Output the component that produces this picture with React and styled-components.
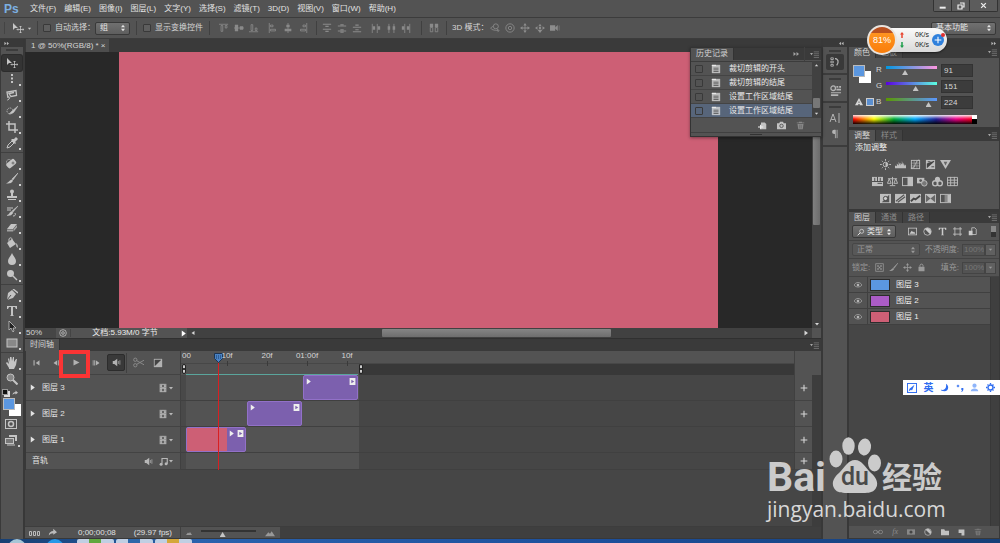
import React, { useState } from 'react';
import styled, { createGlobalStyle, css } from 'styled-components';

const layers = [
    { id: 3, name: '图层 3', color: '#5b97e0' },
    { id: 2, name: '图层 2', color: '#ab5cc6' },
    { id: 1, name: '图层 1', color: '#cd5f75' },
];

const menus = ['文件(F)', '编辑(E)', '图像(I)', '图层(L)', '文字(Y)', '选择(S)', '滤镜(T)', '3D(D)', '视图(V)', '窗口(W)', '帮助(H)'];

const history = ['裁切剪辑的开头', '裁切剪辑的结尾', '设置工作区域结尾', '设置工作区域结尾'];

const toolGroups = [
    ['move', 'marquee', 'lasso', 'quick', 'crop', 'dropper'],
    ['heal', 'brush', 'stamp', 'historyBrush', 'eraser', 'bucket', 'blur', 'dodge'],
    ['pen', 'type', 'select', 'shape'],
    ['hand', 'zoom'],
];

// 图标 (12 x 12)
const line = { fill: 'none', stroke: 'currentColor', strokeWidth: 1 };
const shapes = {
    move: <><path d="M1 1v7l2-2h3z" /><path d="M8.500 4v7M5 7.500h7M7.500 5l1-1 1 1M7.500 10l1 1 1-1M6 6.500l-1 1 1 1M11 6.500l1 1-1 1" {...line} strokeWidth=".8" /></>,
    marquee: <path d="M6 1v10" {...line} strokeWidth="2" strokeDasharray="2 1.500" />,
    lasso: <><path d="M2 9L1 3l9-1.500.5 5-5.500 1-2-3 5-1" {...line} strokeWidth="1.300" /><path d="M2 8c2-1 2 1 1 2s-2 1-1 1" {...line} /></>,
    quick: <><circle cx="4" cy="6" r="3" {...line} strokeDasharray="1 1" /><path d="M12 1L6 6 3 9l4-1 1-1z" stroke="currentColor" strokeWidth=".5" /></>,
    crop: <path d="M3 0v9h9M0 3h9v9" {...line} strokeWidth="1.500" />,
    dropper: <><path d="M1 11l1-3 4-4 2 2-4 4z" {...line} /><path d="M5 3l4 4 1-1-1-1 3-3-2-2-2 2-2 0z" /></>,
    heal: <><rect x="3" y="2" width="6" height="10" rx="2" transform="rotate(50 6 6)" /><circle cx="3" cy="5" r="2.500" {...line} strokeDasharray="1 1" /><path d="M5.500 6h3M7 4.500v3" stroke="#535353" strokeWidth=".7" /></>,
    brush: <><path d="M12 0L6 6l1 1z" stroke="currentColor" strokeWidth=".6" /><path d="M5.500 6.500l1.500 1c-1 3-4 3-7 3 3-1 3-3 5.500-4z" /></>,
    stamp: <><circle cx="6" cy="2.500" r="2" /><path d="M5 3h2v4H5zM1 7h10v2H1zM2 10h8v1H2z" /></>,
    historyBrush: <><path d="M12 1L6 6l1 1zM5.500 6.500l1.500 1c-1 3-4 3-6 3 3-1 2-3 4.500-4z" stroke="currentColor" strokeWidth=".5" /><path d="M1 3h6M1 5h4M9 8c1 2 0 3-2 3" {...line} /></>,
    eraser: <><path d="M5 3h6L7 8H1z" /><path d="M1 8.500h6v2H1zM7.500 8l3.500-4v2.500L7.500 10.500z" opacity=".7" /></>,
    bucket: <><path d="M1 6l5-4 4 5-6 4z" /><path d="M3 5V2c1-2 3-1 3 0v3" {...line} /><path d="M10 6c2 2 2 3 1.500 5-1.500-1-1-3-1.500-5z" /></>,
    blur: <path d="M6 0c1 3 4 5 4 8a4 4 0 0 1-8 0c0-3 3-5 4-8z" />,
    dodge: <><circle cx="4.500" cy="4.500" r="3.500" /><path d="M7 7l4 4" {...line} strokeWidth="1.500" /></>,
    pen: <><path d="M1 11l1-7 4-3 4 4-3 4z" /><path d="M1 11l4-5" stroke="#535353" /><path d="M7 0l5 4" {...line} strokeWidth="1.500" /></>,
    type: <path d="M1 1h10v3h-1L9 2H7v8l1 1H4l1-1V2H3L2 4H1z" />,
    select: <path d="M3 0v9l2-2 2 4 1-1-1-3h3z" fill="#222" stroke="currentColor" strokeWidth=".8" />,
    shape: <rect x="1" y="2" width="10" height="8" fill="#888" stroke="currentColor" />,
    hand: <path d="M3 11L0 6l1-1 2 2-1-5 1-1 1 4V0l1.500 0L6 4l1-4 1 0v5l2-3 1 0-1 6-2 4H3z" />,
    zoom: <><circle cx="4.500" cy="4.500" r="3.500" fill="#888" stroke="currentColor" /><path d="M7 7l4.500 4.500" {...line} strokeWidth="2" /></>,
    mask: <><rect x=".5" y="1.500" width="11" height="9" {...line} /><circle cx="6" cy="6" r="2.500" {...line} strokeWidth="1.500" /></>,
    screen: <><path d="M4 1h8v6h-2V3H4z" /><rect x=".5" y="4.500" width="8" height="5" fill="#777" stroke="currentColor" /><path d="M2 11h8" {...line} /></>,
    alignTop: <path d="M0 1.500h11M2.500 3v7h2V3zM7.500 3v3h2V3z" {...line} />,
    alignMid: <><path d="M0 6h12" {...line} /><path d="M1 2h4v8H1zM7 4h4v4H7z" /></>,
    alignBottom: <path d="M0 10.500h11M2.500 9V2h2v7zM7.500 9V6h2v3z" {...line} />,
    alignLeft: <path d="M1.500 0v12M3 2.500h3v2H3zM3 7.500h6v2H3z" {...line} />,
    alignCenter: <><path d="M6 0v12" {...line} /><path d="M4 2h4v3H4zM2 7h8v3H2z" /></>,
    alignRight: <path d="M10.500 0v12M9 2.500H6v2h3zM9 7.500H3v2h6z" {...line} />,
    distTop: <path d="M1 1.500h10M1 7.500h10M4 4h4M4 10h4" {...line} strokeWidth="1.300" />,
    distMid: <path d="M1 3.500h10M1 9.500h10M4 2h4M4 11h4M4 8h4" {...line} strokeWidth="1.300" />,
    distBottom: <path d="M1 5h10M1 10.500h10M4 2.500h4M4 8h4" {...line} strokeWidth="1.300" />,
    distLeft: <><path d="M1.500 1v11M7.500 1v11" {...line} /><path d="M2 4h3v4H2zM8 4h3v4H8z" /></>,
    distCenter: <><path d="M3.500 1v11M9.500 1v11" {...line} /><path d="M2 4h3v4H2zM8 4h3v4H8z" /></>,
    distRight: <><path d="M4.500 1v11M10.500 1v11" {...line} /><path d="M1 4h3v4H1zM7 4h3v4H7z" /></>,
    autoAlign: <><path d="M1 1h4v4H1zM7 1h4v4H7z" /><path d="M1.500 5.500h3v5h-3zM7.500 5.500h3v5h-3z" {...line} /></>,
    orbit: <><circle cx="7" cy="4" r="3" {...line} /><path d="M4 4C-2 6 2 9 10 9M8 7l3 2-2 2" {...line} /></>,
    roll: <><circle cx="6" cy="6" r="5" {...line} /><circle cx="6" cy="6" r="2" {...line} /></>,
    pan: <path d="M6 0l2 3H4zM6 12l2-3H4zM0 6l3-2v4zM12 6L9 4v4zM5.500 3h1v6h-1zM3 5.500h6v1H3z" />,
    slide: <><path d="M6 1l2 3H4zM6 12l3-4H3zM0 6l3-2v4zM12 6L9 4v4z" /><circle cx="6" cy="6" r="1.500" /></>,
    camera3d: <path d="M0 3h6v6H0zM6 6l3-3v6zM11 3v6" stroke="currentColor" strokeWidth=".6" />,
    first: <path d="M2 3h1.500v7H2zM10 3v7L5 6.500z" />,
    prev: <path d="M7 3v7L2 6.500zM8 3h1v7H8zM10 3h1v7h-1z" />,
    play: <path d="M2 2v8l8-4z" />,
    next: <path d="M5 3v7l5-3.500zM3 3h1v7H3zM1 3h1v7H1z" />,
    sound: <><path d="M1 4h2l4-3v10L3 8H1z" /><path d="M8.500 4v4M10.500 3v6" {...line} strokeWidth=".9" /></>,
    scissors: <><circle cx="2.500" cy="3" r="1.800" {...line} /><circle cx="2.500" cy="9" r="1.800" {...line} /><path d="M4 4l8 4.500M4 8l8-4.500" {...line} /></>,
    transition: <><path d="M1 1h10v10H1z" /><path d="M2 10V2h8z" fill="#444" /></>,
    film: <><path d="M2 1h8v10H2z" /><path d="M5 2h2v3H5zM5 7h2v3H5z" fill="#535353" /><path d="M3.500 1v10M8.500 1v10" stroke="#535353" strokeWidth=".8" strokeDasharray="1 1" /></>,
    note: <><path d="M4 9V2h7v7" {...line} strokeWidth="1.500" /><circle cx="2.800" cy="9.500" r="2" /><circle cx="9.500" cy="9" r="2" /></>,
    caret: <path d="M2 4h8L6 9z" />,
    right: <path d="M3 1v10l7-5z" />,
    left: <path d="M9 2v8L3 6z" />,
    up: <path d="M2 8h8L6 3z" />,
    down: <path d="M2 4h8L6 9z" />,
    updown: <path d="M3 5h6L6 1zM3 7h6l-3 4z" />,
    collapse: <path d="M1 2v8l5-4zM7 2v8l5-4z" />,
    expand: <path d="M5 2v8L0 6zM11 2v8L6 6z" />,
    menu: <><path d="M0 4h4L2 7z" /><path d="M5 2.500h7M5 5h7M5 7.500h7M5 10h7" stroke="currentColor" opacity=".6" /></>,
    plus: <path d="M6 1v10M1 6h10" {...line} strokeWidth="1.600" />,
    doc: <><path d="M1 1h10v10H1z" opacity=".7" /><path d="M1 1h5v1.500H1z" /><path d="M3 5h6M3 7h6M3 9h6" stroke="#555" /></>,
    newDoc: <><path d="M4 2h5l2 2v7H4z" /><path d="M0 8h7M3.500 5v6" stroke="#eee" strokeWidth="1.500" /></>,
    camera: <><path d="M0 3h3l1-2h4l1 2h3v8H0z" /><circle cx="6" cy="6.500" r="2.300" fill="#bbb" stroke="#444" /></>,
    trash: <><path d="M1 2h10v1H1zM4 1h4v1H4zM2 4h8l-1 7H3z" /><path d="M5 5v5M7 5v5" stroke="#535353" strokeWidth=".6" /></>,
    historyPanel: <><path d="M1 1h3v2H1zM1 5h3v2H1zM1 9h3v2H1z" {...line} /><path d="M6 2h2M6 2c4 0 5 4 2 8" {...line} strokeWidth="1.500" /></>,
    properties: <><circle cx="3.500" cy="3.500" r="2.500" {...line} strokeWidth="1.400" /><path d="M7 1h2v2H7zM10 1h2v2h-2zM7 4h5v2H7zM1 8h11v1H1zM1 10h8v2H1z" /></>,
    character: <path d="M1 10l3-8 3 8M2.300 7.500h3.500M10 1v10" {...line} />,
    paragraph: <><path d="M9 1H5a2.500 2.500 0 0 0 0 5h1V1z" /><path d="M6.500 1v10M8.500 1v10" {...line} /></>,
    warn: <path d="M6 0l6 11H7V9H5v2H0zM6 4L5 7h2z" fillRule="evenodd" />,
    sun: <><circle cx="6" cy="6" r="2.500" {...line} /><path d="M6 3.500a2.500 2.500 0 0 1 0 5z" /><path d="M6 0v2M6 10v2M0 6h2M10 6h2M2 2l1 1M9 9l1 1M10 2L9 3M2 10l1-1" {...line} /></>,
    levels: <path d="M0 10h12V7l-1-1v2L9 4v3L7.500 2v4L6 4v3L4 3v4L2 5v3L0 7z" />,
    curves: <><rect x="1.500" y="1.500" width="9" height="9" {...line} /><path d="M4.500 1v10M7.500 1v10M1 4.500h10M1 7.500h10" stroke="currentColor" strokeWidth=".5" /><path d="M1 10c6 0 4-8 9-9" {...line} /></>,
    exposure: <><path d="M1 1h10v10H1z" /><path d="M2 10V5l8-3v1z" fill="#444" /><path d="M3 3h3M7 8.500h3" stroke="#444" /></>,
    vibrance: <><path d="M0 1h12L6 11z" /><path d="M4 3h4L6 7z" fill="#666" /></>,
    hue: <><path d="M0 1h12v10H0z" /><path d="M0 6h12M3 6V2M6 6V1M9 6V2M6 8h5" stroke="#444" /></>,
    balance: <path d="M6 1v9M1 3h10M3 10.500h6M2.500 3L.5 8h4zM9.500 3l-2 5h4z" {...line} />,
    bw: <><rect x=".5" y="1.500" width="11" height="9" {...line} /><path d="M6 1h6v10H6z" /></>,
    photo: <><rect x="0" y="2" width="8" height="6" /><circle cx="4" cy="5" r="1.500" fill="#555" /><circle cx="8" cy="8" r="3" fill="#777" stroke="currentColor" /></>,
    mixer: <><circle cx="6" cy="3.500" r="2.800" /><circle cx="3.500" cy="8" r="2.800" {...line} strokeWidth="1.500" /><circle cx="8.500" cy="8" r="2.800" {...line} strokeWidth="1.500" /></>,
    lookup: <path d="M.5 1.500h11v9H.5zM4 1v10M8 1v10M0 4.500h12M0 7.500h12" {...line} />,
    invert: <><path d="M0 1h12v10H0z" /><path d="M10 2v8H2z" fill="#555" /><circle cx="6" cy="6" r="2.300" fill="#ccc" stroke="#444" /></>,
    posterize: <><path d="M0 1h12v10H0z" /><path d="M1 9l9-7M3 10l8-6" stroke="#555" strokeWidth="1.300" /></>,
    threshold: <><path d="M0 1h12v10H0z" /><path d="M1 9l3-3 2 1 5-4" fill="none" stroke="#444" strokeWidth="2" /></>,
    selective: <><path d="M0 1h12v10H0z" /><path d="M1 2l5 4-5 4zM11 2L6 6l5 4z" fill="#666" /></>,
    gradient: <><rect x=".5" y="1.500" width="11" height="9" {...line} /><path d="M5 2h3v8H5z" opacity=".5" /><path d="M8 2h4v8H8z" /></>,
    search: <><circle cx="7" cy="5" r="3" {...line} /><path d="M5 7l-4 4" {...line} strokeWidth="1.500" /></>,
    image: <><rect x=".5" y="1.500" width="11" height="9" {...line} /><path d="M2 9l3-4 2 2 1-1 2 3z" /></>,
    halfCircle: <><circle cx="6" cy="6" r="5" {...line} /><path d="M2.500 2.500a5 5 0 0 1 7 7z" /></>,
    frame: <path d="M2.500 0v12M9.500 0v12M0 2.500h12M0 9.500h12" {...line} />,
    smart: <><path d="M5 1h4l2 2v7H5z" {...line} /><path d="M1 5h5v6H1z" /></>,
    checker: <><rect x="1" y="1" width="10" height="10" {...line} /><path d="M3 3h2v2H3zM7 3h2v2H7zM5 5h2v2H5zM3 7h2v2H3zM7 7h2v2H7z" /></>,
    lock: <><path d="M2 5h8v6H2z" /><path d="M4 5V3c0-2 4-2 4 0v2" {...line} strokeWidth="1.300" /></>,
    eye: <><path d="M0 6c3-5 9-5 12 0-3 4-9 4-12 0z" {...line} /><circle cx="6" cy="6" r="2" /></>,
    link: <><rect x=".5" y="4" width="5" height="4" rx="2" {...line} /><rect x="6.500" y="4" width="5" height="4" rx="2" {...line} /><path d="M4 6h4" {...line} /></>,
    maskLayer: <><path d="M0 2h12v8H0z" /><circle cx="6" cy="6" r="2.300" fill="#444" /></>,
    folder: <path d="M0 2h5l1 2h6v7H0z" />,
    page: <path d="M1 1h10v10H6V7H1z" />,
    frames: <path d="M.5 4.500h2v4h-2zM4.500 4.500h2v4h-2zM8.500 4.500h2v4h-2z" {...line} />,
    share: <path d="M1 10c0-4 3-6 6-6V1l5 4.500L7 9V7c-3 0-4 1-6 3z" />,
    mountain: <path d="M0 10l4-5 2 2 2-3 4 6z" />,
    clipEnd: <path d="M1 0h10v12H1zM4 3v6l5-3z" fillRule="evenodd" />,
    rateUp: <path d="M6 0l4 5H7.500v7h-3V5H2z" />,
    rateDown: <path d="M6 12l4-5H7.500V0h-3v7H2z" />,
    workspace: <><rect x=".5" y=".5" width="11" height="11" {...line} strokeWidth="1.300" /><path d="M3 7l6-5-3 7-1-1-3 2zM0 9l3 3H0z" /></>,
    moon: <path d="M8 1c5 3 3 10-2 10-3 0-5-1-5-2 5 1 8-2 7-8z" />,
    comma: <><circle cx="3" cy="3" r="1.300" {...line} strokeWidth="1.500" /><path d="M8 6h3v3l-2 3H8l1-3H8z" /></>,
    person: <><circle cx="6" cy="3.500" r="2.800" /><path d="M1 11c0-5 10-5 10 0z" /></>,
    gear: <><circle cx="6" cy="6" r="3.300" {...line} strokeWidth="1.800" /><path d="M6 0v2M6 10v2M0 6h2M10 6h2M2 2l1 1M9 9l1 1M10 2L9 3M2 10l1-1" {...line} strokeWidth="1.800" /></>,
    minimize: <path d="M1 7h9v3H1z" />,
    restore: <path d="M4.500 1.500h6v6h-2M1.500 4.500h6v6h-6z" {...line} strokeWidth="1.800" />,
    close: <path d="M2 2l8 8M10 2l-8 8" {...line} strokeWidth="2.200" />,
};

const Icon = ({ name, size = 12, color }) => (
    <Svg viewBox="0 0 12 12" $size={size} $color={color} aria-hidden="true">{shapes[name]}</Svg>
);

const Drop = ({ label, value, width, dim, lead }) => (
    <DropWrapper $width={width} $dim={dim}>
        {lead && <Icon name={lead} size={8} />}
        <select aria-label={label} defaultValue={value}><option>{value}</option></select>
        <Icon name="updown" size={8} />
    </DropWrapper>
);

const App = () => {
    const [rgb, setRgb] = useState({ R: 91, G: 151, B: 224 });
    const changeRgb = (key, value) => setRgb({ ...rgb, [key]: Number(value) || 0 });

    return (
        <Window>
            <GlobalStyle />

            {/* 菜单栏 */}
            <MenuBar>
                <Logo>Ps</Logo>
                {menus.map((menu) => <MenuItem key={menu}>{menu}</MenuItem>)}
                <WindowButtons>
                    <button aria-label="最小化"><Icon name="minimize" size={8} /></button>
                    <button aria-label="还原"><Icon name="restore" size={8} /></button>
                    <button aria-label="关闭"><Icon name="close" size={7} /></button>
                </WindowButtons>
            </MenuBar>

            {/* 选项栏 */}
            <OptionsBar>
                <CurrentTool aria-label="移动工具"><Icon name="move" /><Icon name="caret" size={5} /></CurrentTool>
                <Divider />
                <CheckLabel><Check type="checkbox" />自动选择：</CheckLabel>
                <Drop label="自动选择" value="组" width={35} />
                <Divider $space={6} />
                <CheckLabel><Check type="checkbox" />显示变换控件</CheckLabel>
                <Divider $space={6} />
                <AlignGroup>{['alignTop', 'alignMid', 'alignBottom'].map((n) => <Tiny key={n} aria-label={n}><Icon name={n} size={10} /></Tiny>)}</AlignGroup>
                <AlignGroup>{['alignLeft', 'alignCenter', 'alignRight'].map((n) => <Tiny key={n} aria-label={n}><Icon name={n} size={10} /></Tiny>)}</AlignGroup>
                <Divider $space={2} />
                <AlignGroup>{['distTop', 'distMid', 'distBottom'].map((n) => <Tiny key={n} aria-label={n}><Icon name={n} size={10} /></Tiny>)}</AlignGroup>
                <AlignGroup>{['distLeft', 'distCenter', 'distRight'].map((n) => <Tiny key={n} aria-label={n}><Icon name={n} size={10} /></Tiny>)}</AlignGroup>
                <Divider $space={4} />
                <Tiny aria-label="自动对齐"><Icon name="autoAlign" size={10} /></Tiny>
                <Divider />
                <Caption>3D 模式：</Caption>
                <ModeGroup>{['orbit', 'roll', 'pan', 'slide', 'camera3d'].map((n) => <button key={n} aria-label={n}><Icon name={n} size={10} /></button>)}</ModeGroup>
                <Workspace><Drop label="工作区" value="基本功能" width={65} /></Workspace>
            </OptionsBar>

            <Body>
                {/* 工具箱 */}
                <Toolbox>
                    <Strip><Icon name="collapse" size={5} /></Strip>
                    <Grip />
                    {toolGroups.map((group, i) => (
                        <ToolGroup key={i}>
                            {group.map((tool) => (
                                <Tool key={tool} aria-label={tool} $active={tool === 'move'} $more={tool !== 'move' && tool !== 'zoom'}>
                                    <Icon name={tool} size={12} />
                                </Tool>
                            ))}
                        </ToolGroup>
                    ))}
                    <SwatchTools>
                        <MiniSwatch />
                        <Icon name="share" size={6} />
                    </SwatchTools>
                    <Swatches><i /><b /></Swatches>
                    <Tool aria-label="快速蒙版"><Icon name="mask" size={12} /></Tool>
                    <Tool aria-label="屏幕模式" $more><Icon name="screen" size={12} /></Tool>
                </Toolbox>

                <Center>
                    {/* 文档 */}
                    <DocTabs><DocTab>1 @ 50%(RGB/8) *<button aria-label="关闭文档">×</button></DocTab></DocTabs>
                    <Stage>
                        <Viewport><Artboard /></Viewport>
                        <ScrollY><ScrollThumb /><Icon name="down" size={6} /></ScrollY>
                    </Stage>
                    <StatusBar>
                        <ZoomLevel aria-label="缩放" defaultValue="50%" />
                        <StatusIcon><Icon name="roll" size={8} /></StatusIcon>
                        <DocSize>文档:5.93M/0 字节</DocSize>
                        <StatusArrow aria-label="状态"><Icon name="right" size={7} /></StatusArrow>
                        <ScrollX><Icon name="left" size={6} /><span /><Icon name="right" size={6} /></ScrollX>
                        <Corner />
                    </StatusBar>

                    {/* 时间轴 */}
                    <PanelTabs $height={12}>
                        <Tab $active>时间轴</Tab>
                        <PanelMenu><Icon name="menu" size={9} /></PanelMenu>
                    </PanelTabs>
                    <Timeline>
                        <TimelineHead>
                            <Controls>
                                {['first', 'prev', 'play', 'next', 'sound'].map((n) => (
                                    <Control key={n} aria-label={n} $active={n === 'sound'}><Icon name={n} size={9} /></Control>
                                ))}
                                <ControlLine />
                                <Control aria-label="拆分"><Icon name="scissors" size={11} color="#8c8c8c" /></Control>
                                <Control aria-label="过渡"><Icon name="transition" size={10} /></Control>
                            </Controls>
                            <Ruler>
                                <RulerMarks>
                                    <span>00</span><span>10f</span><span>20f</span><span>01:00f</span><span>10f</span>
                                </RulerMarks>
                                <WorkArea><Handle /><Range /><Handle /></WorkArea>
                            </Ruler>
                            <HeadEnd />
                        </TimelineHead>

                        {layers.map((layer) => (
                            <Track key={layer.id}>
                                <TrackName>
                                    <Icon name="right" size={7} />
                                    <span>{layer.name}</span>
                                    <Tail aria-label="视频组"><Icon name="film" size={10} /><Icon name="caret" size={6} /></Tail>
                                </TrackName>
                                <Lane>
                                    <Clip $start={{ 3: 117, 2: 61, 1: 0 }[layer.id]} $width={layer.id === 1 ? 60 : 55}>
                                        {layer.id === 1 && <Thumb />}
                                        <Icon name="right" size={7} />
                                        <Icon name="clipEnd" size={7} />
                                    </Clip>
                                </Lane>
                                <AddButton aria-label="添加媒体"><Icon name="plus" size={8} /></AddButton>
                                <TrackScroll />
                            </Track>
                        ))}
                        <Track $audio>
                            <TrackName $audio>
                                <span>音轨</span>
                                <Tail aria-label="音频"><Icon name="sound" size={9} /><Gap /><Icon name="note" size={9} /><Icon name="caret" size={6} /></Tail>
                            </TrackName>
                            <Lane />
                            <AddButton aria-label="添加音频"><Icon name="plus" size={8} /></AddButton>
                            <TrackScroll />
                        </Track>
                        <Playhead>
                            <svg viewBox="0 0 9 10" aria-hidden="true">
                                <path d="M.5.5h8v5l-4 4-4-4z" fill="#4a83c4" stroke="#1d3553" />
                                <path d="M2 3h5M2 5h5" stroke="#173962" strokeDasharray="1 1" />
                            </svg>
                        </Playhead>
                        <Highlight />
                    </Timeline>
                    <TimelineEmpty><TrackScroll /></TimelineEmpty>
                    <TimelineFooter>
                        <FootLeft>
                            <Icon name="frames" size={12} />
                            <Icon name="share" size={9} />
                            <time>0;00;00;08</time>
                            <em>(29.97 fps)</em>
                        </FootLeft>
                        <FootZoom>
                            <Icon name="mountain" size={6} />
                            <ZoomSlider type="range" aria-label="时间轴缩放" defaultValue="38" />
                            <Icon name="mountain" size={10} />
                        </FootZoom>
                    </TimelineFooter>

                    {/* 历史记录 */}
                    <HistoryPanel>
                        <PanelTabs $height={12}>
                            <Tab $active>历史记录</Tab>
                            <PanelMenu><Icon name="collapse" size={6} /><Divider /><Icon name="menu" size={9} /></PanelMenu>
                        </PanelTabs>
                        <HistoryBody>
                            <HistoryList>
                                {history.map((text, i) => (
                                    <HistoryItem key={i} $active={i === 3}>
                                        <Check type="checkbox" aria-label={text} />
                                        <Icon name="doc" size={10} />
                                        {text}
                                    </HistoryItem>
                                ))}
                            </HistoryList>
                            <HistoryScroll><Icon name="up" size={5} /><span /><Icon name="down" size={5} /></HistoryScroll>
                        </HistoryBody>
                        <HistoryFooter>
                            <button aria-label="新建文档"><Icon name="newDoc" size={9} /></button>
                            <button aria-label="新建快照"><Icon name="camera" size={9} /></button>
                            <button aria-label="删除"><Icon name="trash" size={9} color="#888" /></button>
                        </HistoryFooter>
                        <HistoryGrip />
                    </HistoryPanel>
                </Center>

                {/* 折叠面板 */}
                <Dock>
                    <Strip $end><Icon name="expand" size={5} /></Strip>
                    <DockGroup><Grip /><DockButton aria-label="历史记录" $active><Icon name="historyPanel" size={10} /></DockButton></DockGroup>
                    <DockGroup><Grip /><DockButton aria-label="属性"><Icon name="properties" size={11} /></DockButton></DockGroup>
                    <DockGroup>
                        <Grip />
                        <DockButton aria-label="字符"><Icon name="character" size={12} /></DockButton>
                        <DockButton aria-label="段落"><Icon name="paragraph" size={10} /></DockButton>
                    </DockGroup>
                </Dock>

                <Panels>
                    <Strip $end><Icon name="collapse" size={5} /></Strip>
                    {/* 颜色 */}
                    <PanelTabs $height={11}>
                        <Tab $active>颜色</Tab><Tab>色板</Tab>
                        <PanelMenu><Icon name="menu" size={9} /></PanelMenu>
                    </PanelTabs>
                    <ColorBody>
                        <ColorMain>
                            <ColorLeft>
                                <Swatches><i /><b /></Swatches>
                                <Gamut><Icon name="warn" size={8} /><GamutChip /></Gamut>
                            </ColorLeft>
                            <Channels>
                                {['R', 'G', 'B'].map((key) => (
                                    <Channel key={key}>
                                        <label htmlFor={`slider-${key}`}>{key}</label>
                                        <ChannelSlider id={`slider-${key}`} $channel={key} type="range" min="0" max="255" value={rgb[key]} onChange={(e) => changeRgb(key, e.target.value)} />
                                        <ChannelValue aria-label={key} value={rgb[key]} onChange={(e) => changeRgb(key, e.target.value)} />
                                    </Channel>
                                ))}
                            </Channels>
                        </ColorMain>
                        <Ramp><i /></Ramp>
                    </ColorBody>

                    {/* 调整 */}
                    <PanelTabs $height={11}>
                        <Tab $active>调整</Tab><Tab>样式</Tab>
                        <PanelMenu><Icon name="menu" size={9} /></PanelMenu>
                    </PanelTabs>
                    <AdjustBody>
                        <p>添加调整</p>
                        <AdjustRow>{['sun', 'levels', 'curves', 'exposure', 'vibrance'].map((n) => <button key={n} aria-label={n}><Icon name={n} size={11} /></button>)}</AdjustRow>
                        <AdjustRow>{['hue', 'balance', 'bw', 'photo', 'mixer', 'lookup'].map((n) => <button key={n} aria-label={n}><Icon name={n} size={11} /></button>)}</AdjustRow>
                        <AdjustRow>{['invert', 'posterize', 'threshold', 'selective', 'gradient'].map((n) => <button key={n} aria-label={n}><Icon name={n} size={11} /></button>)}</AdjustRow>
                    </AdjustBody>

                    {/* 图层 */}
                    <PanelTabs $height={11}>
                        <Tab $active>图层</Tab><Tab>通道</Tab><Tab>路径</Tab>
                        <PanelMenu><Icon name="menu" size={9} /></PanelMenu>
                    </PanelTabs>
                    <LayerRow>
                        <Drop label="类型" value="类型" width={44} lead="search" />
                        <FilterIcons>{['image', 'halfCircle', 'type', 'frame', 'smart'].map((n) => <button key={n} aria-label={n}><Icon name={n} size={9} /></button>)}</FilterIcons>
                        <FilterSwitch aria-label="过滤开关" />
                    </LayerRow>
                    <LayerRow $dim>
                        <Drop label="混合模式" value="正常" width={68} dim />
                        <Amount><label htmlFor="opacity">不透明度:</label><input id="opacity" defaultValue="100%" /><button aria-label="不透明度"><Icon name="caret" size={5} /></button></Amount>
                    </LayerRow>
                    <LayerRow $dim>
                        <span>锁定:</span>
                        <LockIcons>{['checker', 'brush', 'pan', 'lock'].map((n) => <button key={n} aria-label={n}><Icon name={n} size={9} /></button>)}</LockIcons>
                        <Amount><label htmlFor="fill">填充:</label><input id="fill" defaultValue="100%" /><button aria-label="填充"><Icon name="caret" size={5} /></button></Amount>
                    </LayerRow>
                    <LayerArea>
                        <LayerList>
                            {layers.map((layer) => (
                                <LayerItem key={layer.id}>
                                    <button aria-label="可见性"><Icon name="eye" size={8} /></button>
                                    <LayerThumb $color={layer.color} />
                                    {layer.name}
                                </LayerItem>
                            ))}
                        </LayerList>
                        <LayerScroll />
                    </LayerArea>
                    <LayerFooter>
                        <Icon name="link" size={10} color="#888" />
                        <Fx>fx</Fx>
                        <Icon name="maskLayer" size={8} color="#888" />
                        <Icon name="halfCircle" size={8} />
                        <Icon name="folder" size={8} />
                        <Icon name="page" size={7} />
                        <Icon name="trash" size={8} color="#777" />
                    </LayerFooter>
                </Panels>
            </Body>

            {/* 任务栏 */}
            <Taskbar><Orb /><Orb $blue /><Task $color="#61a83e" /><Task $color="#2d67a9" /><Task $color="#d4a73a" /></Taskbar>

            {/* 网速悬浮球 */}
            <SpeedWidget>
                <Ball>81%</Ball>
                <Arrows><Icon name="rateUp" size={6} color="#e8442f" /><Icon name="rateDown" size={6} color="#1c9e4b" /></Arrows>
                <Rates><span>0K/s</span><span>0K/s</span></Rates>
                <Boost aria-label="加速"><Icon name="plus" size={8} /></Boost>
            </SpeedWidget>

            {/* 输入法 */}
            <ImeBar>
                <Icon name="workspace" size={10} />
                <span>英</span>
                <Icon name="moon" size={9} />
                <Icon name="comma" size={8} />
                <Icon name="person" size={9} color="#8fb5fa" />
                <Icon name="gear" size={9} />
            </ImeBar>

            {/* 水印 */}
            <Watermark>
                <Brand>
                    <span>Bai</span>
                    <Paw>
                        <svg viewBox="0 0 52 56" aria-hidden="true">
                            <ellipse cx="7" cy="22" rx="6.500" ry="8.500" />
                            <ellipse cx="19.500" cy="9" rx="6.200" ry="8.700" />
                            <ellipse cx="35.500" cy="10" rx="6.500" ry="8.500" transform="rotate(8 35.500 10)" />
                            <ellipse cx="45.500" cy="26" rx="6.500" ry="8.500" />
                            <path d="M26 23c7 0 10 7 15 12 6 5 9 11 6 16-3 6-11 5-21 5s-18 1-21-5c-3-5 0-11 6-16 5-5 8-12 15-12z" />
                        </svg>
                        <b>du</b>
                    </Paw>
                    <strong>经验</strong>
                </Brand>
                <Site>jingyan.baidu.com</Site>
            </Watermark>
        </Window>
    );
};

export default App;

/* CSS */
const GlobalStyle = createGlobalStyle`
  * {
    box-sizing: border-box;
  }
  body {
    margin: 0;
    background: #464646;
    color: #d6d6d6;
    font-family: "Liberation Sans", "Noto Sans CJK SC", sans-serif;
    font-size: 8px;
    line-height: 10px;
  }
  button, input, select {
    margin: 0;
    padding: 0;
    border: 0;
    background: none;
    color: inherit;
    font: inherit;
  }
  button {
    display: flex;
    align-items: center;
    justify-content: center;
  }
`;

const Svg = styled.svg`
  width: ${(p) => p.$size}px;
  height: ${(p) => p.$size}px;
  flex: none;
  display: block;
  fill: currentColor;
  color: ${(p) => p.$color || 'inherit'};
`;

const Window = styled.div`
  position: relative;
  min-height: 100vh;
  display: flex;
  flex-direction: column;
  overflow: hidden;
`;

const bar = css`
  display: flex;
  align-items: center;
  background: #535353;
`;

const MenuBar = styled.header`
  ${bar}
  height: 17px;
  padding-left: 4px;
  gap: 8px;
`;

const Logo = styled.span`
  width: 18px;
  color: #7cb0e2;
  font-size: 12px;
  line-height: 16px;
  font-weight: bold;
`;

const MenuItem = styled.button`
  color: #e2e2e2;
  white-space: nowrap;
`;

const WindowButtons = styled.div`
  display: flex;
  align-self: flex-start;
  margin-left: auto;
  margin-right: 2px;
  border: 1px solid #333;
  border-top: 0;
  border-radius: 0 0 2px 2px;
  color: #eee;

  button {
    width: 18px;
    height: 11px;
    border-right: 1px solid #333;
    background: #5c5c5c;
  }
  button:last-child {
    width: 27px;
    border-right: 0;
  }
`;

const OptionsBar = styled.div`
  ${bar}
  height: 22px;
  padding-left: 4px;
  border-top: 1px solid #3c3c3c;
  border-bottom: 1px solid #3c3c3c;
`;

const CurrentTool = styled.button`
  width: 28px;
  gap: 3px;
  padding-left: 6px;
  border-left: 1px solid #444;
  color: #c6c6c6;
`;

const Divider = styled.span`
  width: 1px;
  height: 14px;
  margin: 0 ${(p) => p.$space || 5}px;
  background: #404040;
`;

const CheckLabel = styled.label`
  display: flex;
  align-items: center;
  gap: 4px;
  white-space: nowrap;
`;

const Check = styled.input`
  appearance: none;
  width: 8px;
  height: 8px;
  flex: none;
  border: 1px solid #393939;
  border-radius: 1px;
  background: #5e5e5e;
`;

const DropWrapper = styled.div`
  display: flex;
  align-items: center;
  flex: none;
  width: ${(p) => p.$width}px;
  height: 13px;
  padding: 0 2px 0 4px;
  border: 1px solid ${(p) => (p.$dim ? '#474747' : '#393939')};
  border-radius: 2px;
  background: ${(p) => (p.$dim ? '#585858' : 'linear-gradient(#707070, #5e5e5e)')};
  color: ${(p) => (p.$dim ? '#999' : '#e4e4e4')};

  select {
    appearance: none;
    flex: 1;
    min-width: 0;
    outline: none;
  }
  svg:first-child {
    margin-right: 2px;
  }
`;

const AlignGroup = styled.div`
  display: flex;
  margin-right: 4px;
`;

const Tiny = styled.button`
  width: 15px;
  height: 14px;
  color: #8a8a8a;
`;

const Caption = styled.span`
  white-space: nowrap;
`;

const ModeGroup = styled.div`
  display: flex;
  margin-left: 2px;
  gap: 5px;
  color: #8d8d8d;
`;

const Workspace = styled.div`
  margin-left: auto;
  margin-right: 4px;
`;

const Body = styled.div`
  flex: 1;
  display: flex;
  min-height: 0;
`;

const Strip = styled.div`
  height: 8px;
  display: flex;
  align-items: center;
  justify-content: ${(p) => (p.$end ? 'flex-end' : 'flex-start')};
  padding: 0 3px;
  background: #393939;
  color: #b5b5b5;
`;

const Grip = styled.div`
  width: 12px;
  height: 2px;
  margin: 2px auto;
  background: #3c3c3c;
`;

const Toolbox = styled.aside`
  width: 25px;
  flex: none;
  display: flex;
  flex-direction: column;
  border-right: 2px solid #383838;
  border-left: 1px solid #3a3a3a;
  background: #535353;
  color: #c4c4c4;
`;

const ToolGroup = styled.div`
  padding: 2px 1px 1px;
  border-bottom: 1px solid #404040;

  &:nth-last-of-type(3) {
    border-bottom: 0;
  }
`;

const Tool = styled.button`
  position: relative;
  width: 20px;
  height: 16px;
  flex: none;
  border-radius: 2px;
  background: ${(p) => (p.$active ? '#343434' : 'none')};
  box-shadow: ${(p) => (p.$active ? '0 0 0 1px #2c2c2c' : 'none')};

  &::after {
    content: '';
    display: ${(p) => (p.$more ? 'block' : 'none')};
    position: absolute;
    right: 1px;
    bottom: 1px;
    width: 2px;
    height: 2px;
    background: #d0d0d0;
  }
`;

const SwatchTools = styled.div`
  display: flex;
  justify-content: space-between;
  height: 10px;
  padding: 2px 5px 0 2px;
`;

const MiniSwatch = styled.span`
  width: 4px;
  height: 4px;
  background: #111;
  outline: 1px solid #999;
  box-shadow: 2px 2px 0 1px #ddd;
`;

const Swatches = styled.div`
  display: grid;
  grid-template-columns: 6px 6px 6px;
  grid-template-rows: 6px 6px 6px;
  width: 18px;
  height: 18px;
  flex: none;
  margin: 0 2px;

  i {
    grid-area: 1 / 1 / 3 / 3;
    z-index: 1;
    background: #5b97e0;
    border: 1px solid #bbb;
  }
  b {
    grid-area: 2 / 2 / 4 / 4;
    background: #fff;
  }
`;

const Center = styled.main`
  position: relative;
  flex: 1;
  min-width: 0;
  display: flex;
  flex-direction: column;
  border-right: 2px solid #383838;
`;

const DocTabs = styled.div`
  display: flex;
  height: 13px;
  padding-left: 1px;
  background: #3a3a3a;
`;

const DocTab = styled.div`
  display: flex;
  align-items: center;
  gap: 2px;
  padding: 0 4px 0 5px;
  background: #4d4d4d;
  white-space: nowrap;
`;

const Stage = styled.div`
  flex: 1;
  min-height: 200px;
  display: flex;
`;

const Viewport = styled.div`
  flex: 1;
  display: flex;
  justify-content: center;
  background: #282828;
`;

const Artboard = styled.div`
  width: 76%;
  background: #cd5f75;
`;

const ScrollY = styled.div`
  width: 9px;
  display: flex;
  flex-direction: column;
  align-items: center;
  justify-content: space-between;
  padding-bottom: 1px;
  background: #414141;
`;

const ScrollThumb = styled.span`
  width: 7px;
  height: 63%;
  border-radius: 1px;
  background: linear-gradient(90deg, #808080, #6c6c6c);
`;

const StatusBar = styled.div`
  display: flex;
  align-items: center;
  height: 11px;
  border-bottom: 1px solid #303030;
  background: #535353;
`;

const ZoomLevel = styled.input`
  width: 31px;
  height: 10px;
  padding-left: 1px;
  background: #464646;
`;

const StatusIcon = styled.span`
  padding: 0 3px;
  border-right: 1px solid #444;
`;

const DocSize = styled.span`
  width: 108px;
  text-align: center;
  color: #ededed;
  white-space: nowrap;
`;

const StatusArrow = styled.button`
  width: 8px;
  color: #fff;
`;

const ScrollX = styled.div`
  flex: 1;
  display: grid;
  grid-template-columns: 31% 37% 1fr;
  align-items: center;
  height: 10px;
  padding: 0 3px;
  background: #414141;

  span {
    height: 8px;
    border-radius: 1px;
    background: linear-gradient(#858585, #6e6e6e);
  }
  svg:last-child {
    justify-self: end;
  }
`;

const Corner = styled.span`
  width: 9px;
`;

const PanelTabs = styled.div`
  display: flex;
  height: ${(p) => p.$height}px;
  flex: none;
  background: #3a3a3a;
`;

const Tab = styled.button`
  padding: 0 5px;
  background: ${(p) => (p.$active ? '#535353' : '#424242')};
  border-right: 1px solid #333;
  color: ${(p) => (p.$active ? '#d2d2d2' : '#8c8c8c')};
  white-space: nowrap;
`;

const PanelMenu = styled.div`
  display: flex;
  align-items: center;
  margin-left: auto;
  padding-right: 2px;
  color: #a4a4a4;
`;

const Timeline = styled.section`
  position: relative;
  border-left: 1px solid #383838;
`;

const TimelineHead = styled.div`
  display: flex;
  height: 24px;
  background: #535353;
`;

const Controls = styled.div`
  display: flex;
  align-items: center;
  width: 155px;
  flex: none;
  border-right: 1px solid #3d3d3d;
  border-bottom: 1px solid #434343;
  color: #b2b2b2;
`;

const Control = styled.button`
  width: 20px;
  height: 17px;

  ${(p) => p.$active && css`
    width: 18px;
    margin: 0 1px;
    border: 1px solid #2c2c2c;
    border-radius: 2px;
    background: #393939;
  `}
`;

const ControlLine = styled.span`
  width: 1px;
  height: 20px;
  margin-right: 1px;
  background: #404040;
`;

const Ruler = styled.div`
  flex: 1;
  display: flex;
  flex-direction: column;
`;

const RulerMarks = styled.div`
  display: flex;
  height: 12px;

  span {
    position: relative;
    z-index: 1;
    width: 40px;
    text-align: center;
  }
  span:first-child {
    width: 26px;
    padding-left: 1px;
    text-align: left;
  }
  span:not(:first-child)::after {
    content: '';
    position: absolute;
    left: 20px;
    top: 10px;
    width: 1px;
    height: 5px;
    background: #3a3a3a;
  }
`;

const WorkArea = styled.div`
  flex: 1;
  display: flex;
  border-top: 1px solid #474747;
  background: linear-gradient(90deg, #535353 178px, #383838 178px);
`;

const Handle = styled.span`
  width: 4px;
  height: 10px;
  margin-left: 1px;
  border: 1px solid #222;
  border-radius: 2px;
  background: linear-gradient(#ccc 40%, #333 40% 60%, #ccc 60%);
`;

const Range = styled.span`
  width: 172px;
  border-bottom: 1px solid #5aa59c;
`;

const HeadEnd = styled.div`
  width: 27px;
  border-left: 1px solid #404040;
`;

const Track = styled.div`
  display: flex;
  height: ${(p) => (p.$audio ? 17 : 26)}px;
`;

const TrackName = styled.div`
  display: flex;
  align-items: center;
  width: 155px;
  flex: none;
  gap: 6px;
  padding: 0 6px 0 ${(p) => (p.$audio ? 6 : 3)}px;
  border-right: 1px solid #404040;
  border-bottom: 1px solid #434343;
  background: #535353;
  color: #e2e2e2;
`;

const Tail = styled.button`
  margin-left: auto;
  color: #b8b8b8;
`;

const Gap = styled.span`
  width: 6px;
`;

const Lane = styled.div`
  flex: 1;
  padding-left: 5px;
  border-bottom: 1px solid #404040;
  background: linear-gradient(90deg, #494949 5px, #535353 5px 178px, #464646 178px);
`;

const Clip = styled.div`
  display: flex;
  width: ${(p) => p.$width}px;
  height: 25px;
  margin-left: ${(p) => p.$start}px;
  padding-right: 1px;
  border: 1px solid #9271c8;
  border-radius: 2px;
  background: #7c60ae;
  color: #eee;

  svg {
    margin-top: 2px;
    margin-left: 1px;
  }
  svg:last-child {
    margin-left: auto;
  }
`;

const Thumb = styled.span`
  width: 40px;
  background: #cd5f75;
`;

const AddButton = styled.button`
  width: 18px;
  border-left: 1px solid #404040;
  border-bottom: 1px solid #434343;
  background: #535353;
`;

const TrackScroll = styled.div`
  width: 9px;
  background: #3d3d3d;
`;

const Playhead = styled.div`
  position: absolute;
  left: 188px;
  top: 2px;
  bottom: 0;
  width: 9px;
  background: linear-gradient(90deg, transparent 4px, #d81f22 4px 5px, transparent 5px);

  svg {
    display: block;
    width: 9px;
    height: 10px;
  }
`;

const Highlight = styled.div`
  position: absolute;
  left: 33px;
  top: -1px;
  width: 31px;
  height: 28px;
  border: 4px solid #fb3434;
`;

const TimelineEmpty = styled.div`
  height: 56px;
  display: flex;
  justify-content: flex-end;
  background: #464646;
`;

const TimelineFooter = styled.div`
  display: flex;
  height: 13px;
  border-top: 1px solid #3d3d3d;
  border-bottom: 1px solid #383838;
  background: #3f3f3f;
`;

const FootLeft = styled.div`
  ${bar}
  width: 156px;
  padding: 0 8px 0 4px;
  gap: 7px;
  border-right: 1px solid #404040;
  color: #bbb;

  time {
    margin-left: 14px;
    color: #e0e0e0;
  }
  em {
    margin-left: auto;
    font-style: normal;
    color: #e0e0e0;
  }
`;

const FootZoom = styled.div`
  ${bar}
  gap: 9px;
  padding: 0 5px;
  color: #999;
`;

const ZoomSlider = styled.input`
  appearance: none;
  width: 55px;
  height: 9px;
  background: linear-gradient(#333, #333) 0 2px / 100% 2px no-repeat;

  &::-webkit-slider-thumb {
    appearance: none;
    width: 6px;
    height: 5px;
    margin-top: 4px;
    background: #c4c4c4;
    clip-path: polygon(50% 0, 100% 100%, 0 100%);
  }
`;

const HistoryPanel = styled.section`
  position: absolute;
  top: 8px;
  right: -1px;
  width: 132px;
  border: 1px solid #333;
  background: #535353;
  box-shadow: 0 1px 3px rgba(0, 0, 0, 0.4);
`;

const HistoryBody = styled.div`
  display: flex;
  padding-top: 1px;
`;

const HistoryList = styled.div`
  flex: 1;
  border-top: 1px solid #3c3c3c;
`;

const HistoryItem = styled.div`
  display: flex;
  align-items: center;
  height: 14px;
  padding-left: 4px;
  border-bottom: 1px solid #444;
  background: ${(p) => (p.$active ? '#57657a' : 'none')};
  color: #e8e8e8;

  input {
    background: transparent;
  }
  svg {
    margin: 0 8px;
  }
`;

const HistoryScroll = styled.div`
  display: flex;
  flex-direction: column;
  align-items: center;
  justify-content: space-between;
  width: 9px;
  padding: 2px 0;
  background: #414141;

  span {
    width: 7px;
    height: 10px;
    margin-top: 26px;
    border-radius: 1px;
    background: #777;
  }
`;

const HistoryFooter = styled.div`
  display: flex;
  align-items: center;
  justify-content: flex-end;
  height: 14px;
  gap: 10px;
  padding-right: 16px;
  color: #c2c2c2;
`;

const HistoryGrip = styled.div`
  height: 4px;
  border-top: 1px solid #404040;
  background: linear-gradient(#333, #333) center / 12px 1px no-repeat;
`;

const Dock = styled.aside`
  width: 26px;
  flex: none;
  border-right: 2px solid #383838;
  background: #535353;
`;

const DockGroup = styled.div`
  padding: 1px 3px 3px;
  border-bottom: 2px solid #3c3c3c;
`;

const DockButton = styled.button`
  width: 18px;
  height: 16px;
  border-radius: 2px;
  background: ${(p) => (p.$active ? '#393939' : 'none')};
  color: #b4b4b4;
`;

const Panels = styled.aside`
  width: 151px;
  flex: none;
  display: flex;
  flex-direction: column;
  border-right: 1px solid #383838;
  background: #464646;
`;

const ColorBody = styled.div`
  height: 72px;
  padding: 3px 4px;
  border-bottom: 3px solid #383838;
  background: #535353;
`;

const ColorMain = styled.div`
  display: flex;
  height: 54px;
`;

const ColorLeft = styled.div`
  display: flex;
  flex-direction: column;
  justify-content: space-between;
  width: 23px;
  padding: 4px 0 9px;

  ${Swatches} {
    margin: 0;
  }
`;

const Gamut = styled.div`
  display: flex;
  align-items: center;
  justify-content: flex-end;
  gap: 3px;
  padding-right: 2px;
`;

const GamutChip = styled.span`
  width: 8px;
  height: 8px;
  border: 1px solid #ccc;
  background: #5b8fd0;
`;

const Channels = styled.div`
  padding-top: 1px;
`;

const Channel = styled.div`
  display: flex;
  align-items: center;
  height: 16px;

  label {
    width: 10px;
  }
`;

const tracks = {
    R: '#0097e0, #ff97e0',
    G: '#5b00e0, #5bffe0',
    B: '#5b9700, #5b97ff',
};

const ChannelSlider = styled.input`
  appearance: none;
  width: 51px;
  height: 10px;
  background: linear-gradient(90deg, ${(p) => tracks[p.$channel]}) 0 1px / 100% 3px no-repeat;

  &::-webkit-slider-thumb {
    appearance: none;
    width: 6px;
    height: 5px;
    margin-top: 5px;
    background: #c4c4c4;
    clip-path: polygon(50% 0, 100% 100%, 0 100%);
  }
`;

const ChannelValue = styled.input`
  width: 32px;
  height: 13px;
  margin-left: 4px;
  padding-left: 2px;
  border: 1px solid #333;
  background: #3c3c3c;
`;

const Ramp = styled.div`
  display: flex;
  justify-content: flex-end;
  width: 124px;
  height: 9px;
  background:
    linear-gradient(rgba(255, 255, 255, 0.9), transparent 45%, rgba(0, 0, 0, 0.9)),
    linear-gradient(90deg, #f00, #ff0 17%, #0a3 33%, #0af 50%, #229 67%, #e08 83%, #f00);

  i {
    width: 5px;
    background: linear-gradient(#fff 50%, #000 50%);
  }
`;

const AdjustBody = styled.div`
  height: 71px;
  padding: 2px 6px;
  border-bottom: 3px solid #383838;
  background: #535353;

  p {
    margin: 0 0 3px;
    color: #eee;
  }
`;

const AdjustRow = styled.div`
  display: flex;
  justify-content: center;
  align-items: center;
  height: 17px;
  gap: 4px;
  padding-right: 18px;
  color: #bebebe;

  button {
    width: 11px;
  }
`;

const LayerRow = styled.div`
  ${bar}
  height: 18px;
  padding: 0 3px;
  border-bottom: 1px solid #434343;
  color: ${(p) => (p.$dim ? '#9a9a9a' : '#ccc')};
`;

const FilterIcons = styled.div`
  display: flex;
  gap: 6px;
  margin-left: 12px;
`;

const FilterSwitch = styled.button`
  width: 5px;
  height: 11px;
  margin-left: auto;
  background: linear-gradient(#888 50%, #333 50%);
`;

const Amount = styled.div`
  display: flex;
  align-items: center;
  margin-left: auto;

  label {
    margin-right: 3px;
  }
  input {
    width: 23px;
    height: 12px;
    padding-left: 1px;
    border: 1px solid #444;
    color: #777;
  }
  button {
    width: 11px;
    height: 12px;
    border: 1px solid #444;
    background: #606060;
  }
`;

const LockIcons = styled.div`
  display: flex;
  gap: 5px;
  margin-left: 5px;
`;

const LayerArea = styled.div`
  flex: 1;
  display: flex;
`;

const LayerList = styled.div`
  flex: 1;
`;

const LayerItem = styled.div`
  display: flex;
  align-items: center;
  height: 16px;
  border-bottom: 1px solid #404040;
  background: #535353;
  color: #ececec;

  button {
    width: 19px;
    height: 15px;
    border-right: 1px solid #404040;
    color: #b5b5b5;
  }
`;

const LayerThumb = styled.span`
  width: 20px;
  height: 12px;
  margin: 0 6px 0 2px;
  border: 1px solid #2c2c2c;
  background: ${(p) => p.$color};
`;

const LayerScroll = styled.div`
  width: 9px;
  border-left: 1px solid #383838;
  background: #3f3f3f;
`;

const LayerFooter = styled.div`
  ${bar}
  justify-content: flex-end;
  gap: 9px;
  height: 13px;
  padding-right: 17px;
  border-bottom: 1px solid #383838;
  color: #c2c2c2;
`;

const Fx = styled.i`
  font-family: "Liberation Serif", serif;
  color: #8c8c8c;
`;

const Taskbar = styled.footer`
  display: flex;
  height: 4px;
  overflow: hidden;
  padding-left: 8px;
  gap: 2px;
  background: linear-gradient(90deg, #173f72, #2a62ad 20%, #1c4f9b 60%, #163f77);
`;

const Orb = styled.span`
  width: 18px;
  height: 18px;
  margin-right: ${(p) => (p.$blue ? 11 : 18)}px;
  border-radius: 50%;
  background: ${(p) => (p.$blue ? '#2699e8' : '#a6c6d6')};
`;

const Task = styled.span`
  width: 37px;
  height: 4px;
  border-radius: 2px 2px 0 0;
  background: linear-gradient(90deg, #c0cfe3 12px, ${(p) => p.$color} 12px 24px, #c0cfe3 24px);
`;

const SpeedWidget = styled.div`
  position: absolute;
  top: 28px;
  right: 53px;
  display: flex;
  align-items: center;
  width: 66px;
  height: 24px;
  border-radius: 0 12px 12px 0;
  background: linear-gradient(#fafafa, #d9d9d9);
  box-shadow: 0 1px 2px rgba(0, 0, 0, 0.5);
  color: #333;
`;

const Ball = styled.div`
  width: 30px;
  height: 30px;
  flex: none;
  margin-left: -14px;
  border: 2px solid #e9e4df;
  border-radius: 50%;
  background: linear-gradient(#b9501f 22%, #ff9420 22%, #f97d0b);
  color: #fff;
  font-size: 9px;
  line-height: 26px;
  text-align: center;
`;

const Arrows = styled.div`
  display: grid;
  gap: 4px;
  margin-left: 2px;
`;

const Rates = styled.div`
  display: grid;
  margin-left: auto;
  color: #222;
  font-size: 7px;
`;

const Boost = styled.button`
  position: relative;
  width: 12px;
  height: 12px;
  margin: 0 3px;
  border-radius: 50%;
  background: #2f80dc;
  color: #fff;

  &::after {
    content: '';
    position: absolute;
    top: -1px;
    right: -1px;
    width: 4px;
    height: 4px;
    border-radius: 50%;
    background: #e03030;
  }
`;

const ImeBar = styled.div`
  position: absolute;
  top: 380px;
  right: 0;
  display: flex;
  align-items: center;
  justify-content: space-between;
  width: 97px;
  height: 15px;
  padding: 0 5px 0 4px;
  background: #fff;
  color: #2f6df0;
  font-size: 10px;
  font-weight: bold;
`;

const Watermark = styled.div`
  position: absolute;
  right: 53px;
  bottom: 20px;
  width: 180px;
  color: #cbcbcb;
`;

const Brand = styled.div`
  display: flex;
  align-items: flex-end;
  height: 56px;

  span {
    width: 62px;
    font-family: Roboto, sans-serif;
    font-size: 41px;
    line-height: 32px;
    font-weight: bold;
  }
  strong {
    margin-left: 1px;
    font-size: 30px;
    line-height: 30px;
  }
`;

const Paw = styled.div`
  position: relative;
  width: 52px;
  height: 56px;

  svg {
    display: block;
    width: 52px;
    height: 56px;
    fill: currentColor;
  }
  b {
    position: absolute;
    left: 0;
    right: 0;
    bottom: 4px;
    color: #4a4a4a;
    font-family: Roboto, sans-serif;
    font-size: 25px;
    line-height: 24px;
    font-weight: 500;
    text-align: center;
  }
`;

const Site = styled.div`
  padding-top: 2px;
  color: #d8d8d8;
  font-family: "Open Sans", sans-serif;
  font-size: 21px;
  line-height: 28px;
`;
